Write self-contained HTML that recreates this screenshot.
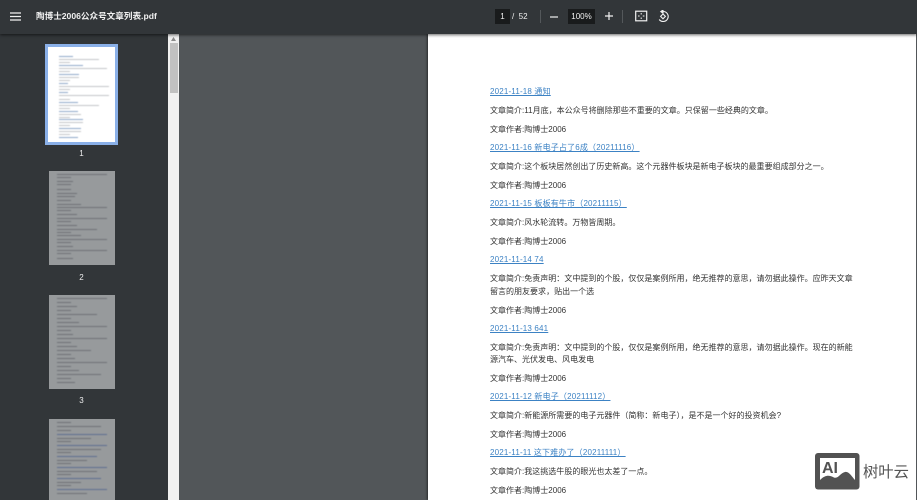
<!DOCTYPE html>
<html><head><meta charset="utf-8">
<style>
html,body{margin:0;padding:0}
body{width:917px;height:500px;overflow:hidden;position:relative;background:#525659;font-family:"Liberation Sans","Noto Sans CJK SC",sans-serif}
.abs{position:absolute}
#top{left:0;top:0;width:917px;height:34px;background:#323639;box-shadow:0 1px 3px rgba(0,0,0,.6);z-index:5;color:#f1f1f1}
#side{left:0;top:34px;width:168px;height:466px;background:#323639}
#sb{left:168px;top:34px;width:11px;height:466px;background:#f1f1f1}
#thumb{left:169.5px;top:43px;width:8px;height:50px;background:#c1c1c1}
#main{left:179px;top:34px;width:249px;height:466px;background:#525659}
#page{left:428px;top:34px;width:488px;height:466px;background:#fff;box-shadow:-1px 0 2px rgba(0,0,0,.5)}
#edge{left:916px;top:34px;width:1px;height:466px;background:#525659}
.l{position:absolute;left:490px;font-size:8px;line-height:12px;color:#333;white-space:nowrap;letter-spacing:.01px;filter:blur(.25px)}
.a{color:#3c82c4;text-decoration:underline;text-underline-offset:1px;letter-spacing:.17px}
.n{position:absolute;width:20px;text-align:center;left:71.5px;color:#eee;font-size:8px;line-height:10px}
.t{position:absolute;left:49px;width:66px;height:94px;background:#979a9c}
.t svg,.t1 svg{display:block;filter:blur(.5px)}
.t1{position:absolute;left:45px;top:44px;width:67px;height:95px;background:#fff;border:3px solid #8ab0e8}
</style></head><body>
<div class="abs" id="main"></div>
<div class="abs" id="page"></div>
<div class="abs" id="edge"></div>
<div class="abs" id="side">
</div>
<div class="abs" id="sb"></div>
<div class="abs" id="thumb"></div>
<svg class="abs" style="left:168px;top:34px" width="11" height="10"><path d="M5.5 3 L8 7 H3 Z" fill="#8a8a8a"/></svg>

<div class="t1"><svg width="67" height="95">
<g fill="#8fa8c8"><rect x="11" y="9" width="14" height="1"/><rect x="11" y="18" width="24" height="1"/><rect x="11" y="27" width="20" height="1"/><rect x="11" y="36" width="9" height="1"/><rect x="11" y="45" width="9" height="1"/><rect x="11" y="55" width="19" height="1"/><rect x="11" y="64" width="19" height="1"/><rect x="11" y="72" width="24" height="1"/><rect x="11" y="81" width="22" height="1"/><rect x="11" y="90" width="19" height="1"/></g>
<g fill="#c4c6c8"><rect x="11" y="12" width="40" height="1"/><rect x="11" y="15" width="11" height="1"/><rect x="11" y="21" width="48" height="1"/><rect x="11" y="24" width="11" height="1"/><rect x="11" y="30" width="20" height="1"/><rect x="11" y="33" width="11" height="1"/><rect x="11" y="39" width="50" height="1"/><rect x="11" y="42" width="11" height="1"/><rect x="11" y="48" width="50" height="1"/><rect x="11" y="52" width="11" height="1"/><rect x="11" y="58" width="40" height="1"/><rect x="11" y="61" width="11" height="1"/><rect x="11" y="67" width="22" height="1"/><rect x="11" y="70" width="11" height="1"/><rect x="11" y="75" width="24" height="1"/><rect x="11" y="78" width="11" height="1"/><rect x="11" y="84" width="22" height="1"/><rect x="11" y="87" width="11" height="1"/></g>
</svg></div>
<div class="n" style="top:149px">1</div>

<div class="t" style="top:171px"><svg width="66" height="94">
<g fill="#6f7277"><rect x="8" y="3" width="50" height="1"/><rect x="8" y="6" width="14" height="1"/><rect x="8" y="10" width="16" height="1"/><rect x="8" y="13" width="14" height="1"/><rect x="8" y="18" width="14" height="1"/><rect x="8" y="22" width="20" height="1"/><rect x="8" y="25" width="18" height="1"/><rect x="8" y="29" width="14" height="1"/><rect x="8" y="33" width="24" height="1"/><rect x="8" y="36" width="50" height="1"/><rect x="8" y="39" width="14" height="1"/><rect x="8" y="43" width="20" height="1"/><rect x="8" y="47" width="50" height="1"/><rect x="8" y="50" width="14" height="1"/><rect x="8" y="54" width="20" height="1"/><rect x="8" y="58" width="40" height="1"/><rect x="8" y="61" width="14" height="1"/><rect x="8" y="64" width="24" height="1"/><rect x="8" y="68" width="50" height="1"/><rect x="8" y="71" width="14" height="1"/><rect x="8" y="75" width="16" height="1"/><rect x="8" y="79" width="50" height="1"/><rect x="8" y="82" width="14" height="1"/><rect x="8" y="87" width="16" height="1"/></g>
</svg></div>
<div class="n" style="top:273px">2</div>

<div class="t" style="top:295px"><svg width="66" height="94">
<g fill="#6f7277"><rect x="8" y="3" width="50" height="1"/><rect x="8" y="7" width="14" height="1"/><rect x="8" y="11" width="20" height="1"/><rect x="8" y="15" width="14" height="1"/><rect x="8" y="19" width="40" height="1"/><rect x="8" y="23" width="14" height="1"/><rect x="8" y="27" width="22" height="1"/><rect x="8" y="31" width="50" height="1"/><rect x="8" y="35" width="14" height="1"/><rect x="8" y="39" width="16" height="1"/><rect x="8" y="43" width="50" height="1"/><rect x="8" y="47" width="14" height="1"/><rect x="8" y="51" width="20" height="1"/><rect x="8" y="55" width="34" height="1"/><rect x="8" y="59" width="14" height="1"/><rect x="8" y="63" width="18" height="1"/><rect x="8" y="67" width="50" height="1"/><rect x="8" y="71" width="14" height="1"/><rect x="8" y="75" width="22" height="1"/><rect x="8" y="79" width="44" height="1"/><rect x="8" y="83" width="14" height="1"/><rect x="8" y="87" width="18" height="1"/></g>
</svg></div>
<div class="n" style="top:396px">3</div>

<div class="t" style="top:419px;height:81px"><svg width="66" height="81">
<g fill="#6f7277"><rect x="8" y="3" width="14" height="1"/><rect x="8" y="7" width="44" height="1"/><rect x="8" y="11" width="14" height="1"/></g>
<g fill="#5f6f90"><rect x="8" y="15" width="50" height="1"/><rect x="8" y="26" width="50" height="1"/><rect x="8" y="37" width="40" height="1"/><rect x="8" y="48" width="50" height="1"/><rect x="8" y="59" width="44" height="1"/><rect x="8" y="70" width="50" height="1"/></g>
<g fill="#6f7277"><rect x="8" y="19" width="34" height="1"/><rect x="8" y="22" width="14" height="1"/><rect x="8" y="30" width="44" height="1"/><rect x="8" y="33" width="14" height="1"/><rect x="8" y="41" width="30" height="1"/><rect x="8" y="44" width="14" height="1"/><rect x="8" y="52" width="40" height="1"/><rect x="8" y="55" width="14" height="1"/><rect x="8" y="63" width="24" height="1"/><rect x="8" y="66" width="14" height="1"/><rect x="8" y="74" width="30" height="1"/></g>
</svg></div>

<div class="abs" id="top">
  <svg class="abs" style="left:10px;top:12px" width="11" height="9"><path d="M0 1H11M0 4.5H11M0 8H11" stroke="#f1f1f1" stroke-width="1.3"/></svg>
  <div class="abs" style="left:36px;top:10px;font-size:8.6px;line-height:12px;font-weight:bold;white-space:nowrap">陶博士2006公众号文章列表.pdf</div>
  <div class="abs" style="left:495px;top:9px;width:15px;height:15px;background:#191b1c;text-align:center;font-size:8px;line-height:15px">1</div>
  <div class="abs" style="left:512px;top:9px;font-size:8px;line-height:15px;white-space:nowrap">/&nbsp; 52</div>
  <div class="abs" style="left:540px;top:10px;width:1px;height:13px;background:#54585b"></div>
  <svg class="abs" style="left:549px;top:12px" width="10" height="10"><path d="M1 5H9" stroke="#f1f1f1" stroke-width="1.2"/></svg>
  <div class="abs" style="left:568px;top:9px;width:27px;height:15px;background:#191b1c;text-align:center;font-size:8px;line-height:15px">100%</div>
  <svg class="abs" style="left:604px;top:11px" width="10" height="10"><path d="M1 5H9M5 1V9" stroke="#f1f1f1" stroke-width="1.2"/></svg>
  <div class="abs" style="left:622px;top:10px;width:1px;height:13px;background:#54585b"></div>
  <svg class="abs" style="left:635px;top:10px" width="13" height="13"><rect x=".7" y="1.2" width="11" height="9.6" fill="none" stroke="#f1f1f1" stroke-width="1.2"/><path d="M6.2 3V4.5M6.2 7.5V9M3 6H4.6M7.8 6H9.4" stroke="#f1f1f1"/></svg>
  <svg class="abs" style="left:657px;top:10px" width="13" height="13" fill="none" stroke="#f1f1f1" stroke-width="1.1"><path d="M6 1.5A5 5 0 1 1 2.2 9.5"/><path d="M6 0V3.2L3.8 1.6Z" fill="#f1f1f1"/><path d="M6 4L8.4 6.4L6 8.8L3.6 6.4Z"/></svg>
</div>

<a class="l a" style="top:86px">2021-11-18 通知</a>
<div class="l" style="top:105px">文章简介:11月底，本公众号将删除那些不重要的文章。只保留一些经典的文章。</div>
<div class="l" style="top:124px">文章作者:陶博士2006</div>
<a class="l a" style="top:142px">2021-11-16 新电子占了6成（20211116）</a>
<div class="l" style="top:161px">文章简介:这个板块居然创出了历史新高。这个元器件板块是新电子板块的最重要组成部分之一。</div>
<div class="l" style="top:180px">文章作者:陶博士2006</div>
<a class="l a" style="top:198px">2021-11-15 板板有牛市（20211115）</a>
<div class="l" style="top:217px">文章简介:风水轮流转。万物皆周期。</div>
<div class="l" style="top:236px">文章作者:陶博士2006</div>
<a class="l a" style="top:254px">2021-11-14 74</a>
<div class="l" style="top:273px">文章简介:免责声明：文中提到的个股，仅仅是案例所用，绝无推荐的意思，请勿据此操作。应昨天文章</div>
<div class="l" style="top:286px">留言的朋友要求，贴出一个选</div>
<div class="l" style="top:305px">文章作者:陶博士2006</div>
<a class="l a" style="top:323px">2021-11-13 641</a>
<div class="l" style="top:342px">文章简介:免责声明：文中提到的个股，仅仅是案例所用，绝无推荐的意思，请勿据此操作。现在的新能</div>
<div class="l" style="top:354px">源汽车、光伏发电、风电发电</div>
<div class="l" style="top:373px">文章作者:陶博士2006</div>
<a class="l a" style="top:391px">2021-11-12 新电子（20211112）</a>
<div class="l" style="top:410px">文章简介:新能源所需要的电子元器件（简称：新电子），是不是一个好的投资机会?</div>
<div class="l" style="top:429px">文章作者:陶博士2006</div>
<a class="l a" style="top:447px">2021-11-11 这下难办了（20211111）</a>
<div class="l" style="top:466px">文章简介:我这挑选牛股的眼光也太差了一点。</div>
<div class="l" style="top:485px">文章作者:陶博士2006</div>

<svg class="abs" style="left:815px;top:453px;z-index:6" width="45" height="37">
  <rect x="0" y="0" width="44.5" height="36.5" rx="3" fill="#525252"/>
  <rect x="5" y="5" width="35" height="26" fill="#fff"/>
  <path d="M5 27 C10 22 14 22 18 24 C23 27 25 20 30 19 C34 18 37 24 40 27 V31 H5Z" fill="#525252"/>
  <text x="7" y="20" font-family="Liberation Sans" font-size="16" font-weight="bold" fill="#525252">AI</text>
</svg>
<div class="abs" style="left:863px;top:462px;font-size:15.3px;line-height:18px;color:#555;white-space:nowrap;z-index:6;font-family:'Noto Sans CJK SC',sans-serif">树叶云</div>
</body></html>
